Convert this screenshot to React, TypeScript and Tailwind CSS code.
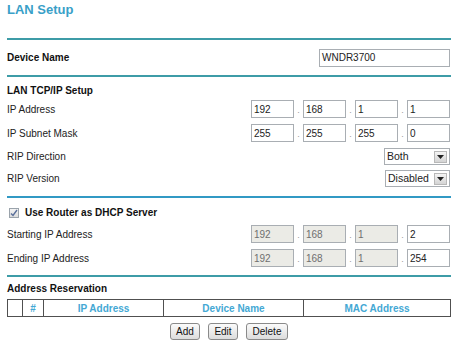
import React from "react";

const font = { fontFamily: '"Liberation Sans", Arial, sans-serif' };

function Hr({ blue }: { blue?: boolean }) {
  return <div className={blue ? "h-[2px] bg-[#3199c4]" : "h-[2px] bg-[#3e9ca7]"} />;
}

function Box({ v, w = "w-[43px]", disabled }: { v: string; w?: string; disabled?: boolean }) {
  return (
    <div
      className={`${w} h-[18px] border border-[#a9aeb3] ${
        disabled ? "bg-[#ebebe6] text-[#6f6f6f]" : "bg-white text-[#222]"
      } flex items-center pl-[2px] text-[10px]`}
    >
      {v}
    </div>
  );
}

function Dot() {
  return <div className="w-[9px] h-[18px] flex items-end justify-center pb-[3px] text-[9px] leading-[9px] text-[#999]">.</div>;
}

function Ip({ vals, dis }: { vals: string[]; dis?: boolean }) {
  return (
    <div className="flex">
      <Box v={vals[0]} disabled={dis} />
      <Dot />
      <Box v={vals[1]} disabled={dis} />
      <Dot />
      <Box v={vals[2]} disabled={dis} />
      <Dot />
      <Box v={vals[3]} />
    </div>
  );
}

function Select({ v, w }: { v: string; w: string }) {
  return (
    <div className={`${w} h-[17px] border border-[#a9aeb3] bg-white flex items-center justify-between pl-[2px] pr-[2px] text-[10.5px] text-[#222]`}>
      <span>{v}</span>
      <div className="w-[13px] h-[12px] border border-[#b8b8b8] bg-gradient-to-b from-[#f4f4f4] to-[#d4d4d4] flex items-center justify-center">
        <svg width="7" height="4" viewBox="0 0 7 4">
          <path d="M0 0 H7 L3.5 4 Z" fill="#222" />
        </svg>
      </div>
    </div>
  );
}

function Row({ label, children, h = "h-[18px]", mt = "" }: { label: string; children: React.ReactNode; h?: string; mt?: string }) {
  return (
    <div className={`flex items-center justify-between ${h} ${mt} pr-[1px]`}>
      <span className="text-[10px] text-[#222]">{label}</span>
      {children}
    </div>
  );
}

function Btn({ t, w }: { t: string; w: string }) {
  return (
    <div className={`${w} h-[17px] rounded-[3px] border border-[#8a8a8a] bg-gradient-to-b from-[#fbfbfb] to-[#dcdcdc] flex items-center justify-center text-[10px] text-[#111]`}>
      {t}
    </div>
  );
}

export default function App() {
  return (
    <div style={font} className="w-[459px] h-[343px] bg-white overflow-hidden">
      <div className="w-[444px] ml-[7px] flex flex-col">
        <div className="h-[38px] pt-[2px]">
          <div className="text-[13px] leading-[16px] font-bold text-[#39a0c8]">LAN Setup</div>
        </div>
        <Hr />
        <div className="h-[35px] flex items-center justify-between pr-[1px]">
          <span className="text-[10px] font-bold text-[#111]">Device Name</span>
          <Box v="WNDR3700" w="w-[131px]" />
        </div>
        <Hr />
        <div className="h-[23px] flex items-center pt-[3px]">
          <span className="text-[10px] font-bold text-[#111]">LAN TCP/IP Setup</span>
        </div>
        <Row label="IP Address">
          <Ip vals={["192", "168", "1", "1"]} />
        </Row>
        <Row label="IP Subnet Mask" mt="mt-[6px]">
          <Ip vals={["255", "255", "255", "0"]} />
        </Row>
        <Row label="RIP Direction" mt="mt-[6px]" h="h-[17px]">
          <Select v="Both" w="w-[66px]" />
        </Row>
        <Row label="RIP Version" mt="mt-[5px]" h="h-[17px]">
          <Select v="Disabled" w="w-[65px]" />
        </Row>
        <div className="mt-[9px]">
          <Hr blue />
        </div>
        <div className="h-[27px] flex items-center pt-[2px]">
          <div className="ml-[2px] w-[10px] h-[10px] border border-[#9aa3ab] bg-gradient-to-b from-[#f4f4f4] to-[#dcdcdc] flex items-center justify-center">
            <svg width="8" height="8" viewBox="0 0 8 8">
              <path d="M1 4.5 L3 6.5 L7 1" stroke="#5a6f9a" strokeWidth="1.4" fill="none" />
            </svg>
          </div>
          <span className="ml-[6px] text-[10px] font-bold text-[#111]">Use Router as DHCP Server</span>
        </div>
        <Row label="Starting IP Address">
          <Ip vals={["192", "168", "1", "2"]} dis />
        </Row>
        <Row label="Ending IP Address" mt="mt-[6px]">
          <Ip vals={["192", "168", "1", "254"]} dis />
        </Row>
        <div className="mt-[8px]">
          <Hr />
        </div>
        <div className="h-[22px] flex items-end pb-[3px]">
          <span className="text-[10px] font-bold text-[#111]">Address Reservation</span>
        </div>
        <div className="h-[18px] border-[1.5px] border-[#505050] flex text-[10px] font-bold text-[#44a8d4]">
          <div className="w-[15px] border-r-[1.5px] border-[#505050]" />
          <div className="w-[21px] border-r-[1.5px] border-[#505050] flex items-center justify-center">#</div>
          <div className="w-[120px] border-r-[1.5px] border-[#505050] flex items-center justify-center">IP Address</div>
          <div className="w-[140px] border-r-[1.5px] border-[#505050] flex items-center justify-center">Device Name</div>
          <div className="flex-1 flex items-center justify-center">MAC Address</div>
        </div>
        <div className="mt-[6px] flex justify-center gap-[8px]">
          <Btn t="Add" w="w-[30px]" />
          <Btn t="Edit" w="w-[30px]" />
          <Btn t="Delete" w="w-[42px]" />
        </div>
      </div>
    </div>
  );
}
